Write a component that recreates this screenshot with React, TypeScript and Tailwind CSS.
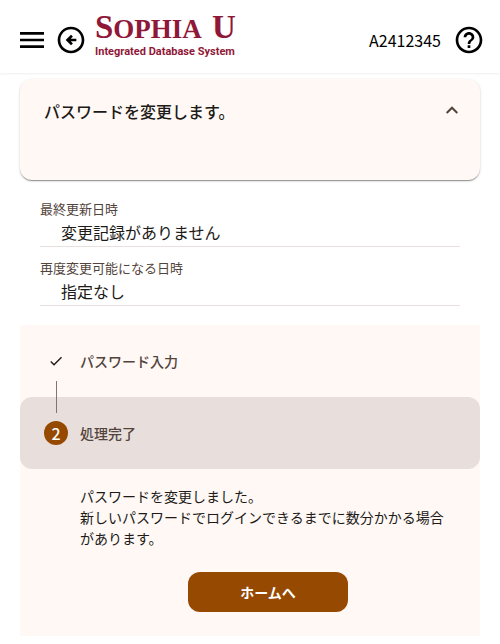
import {
  MdCheck,
  MdHelpOutline,
  MdMenu,
  MdOutlineArrowCircleLeft,
} from "react-icons/md"

const records = [
  { label: "最終更新日時", value: "変更記録がありません" },
  { label: "再度変更可能になる日時", value: "指定なし" },
]

function Logo() {
  return (
    <svg
      className="h-12 w-40 overflow-visible fill-[#8f1838]"
      viewBox="0 0 160 48"
      role="img"
      aria-label="Sophia U Integrated Database System"
    >
      <g className="font-['Liberation_Serif',serif] font-bold">
        <text x="0" y="22">
          <tspan fontSize="33">S</tspan>
          <tspan fontSize="27">OPHIA</tspan>
        </text>
        <text x="117" y="22" fontSize="33">
          U
        </text>
      </g>
      <text
        x="0"
        y="39"
        fontSize="11"
        className="font-[Roboto,sans-serif] font-bold"
      >
        Integrated Database System
      </text>
    </svg>
  )
}

function ChevronUp() {
  return (
    <svg
      className="size-6 fill-none stroke-[#52443c] stroke-2"
      viewBox="0 0 24 24"
      aria-hidden="true"
    >
      <path d="M6.7 14 12 8.7l5.3 5.3" />
    </svg>
  )
}

function Header() {
  return (
    <header className="flex h-[73px] items-center bg-white pt-[7px] pr-[15px] pl-4 text-black shadow-[0_0_3px_rgba(0,0,0,0.12)]">
      <button className="cursor-pointer" aria-label="メニュー">
        <MdMenu size={32} />
      </button>
      <button className="ml-[7px] cursor-pointer" aria-label="戻る">
        <MdOutlineArrowCircleLeft size={32} />
      </button>
      <a href="#" className="ml-2">
        <Logo />
      </a>
      <span className="ml-auto text-base">A2412345</span>
      <button className="ml-3 cursor-pointer" aria-label="ヘルプ">
        <MdHelpOutline size={32} />
      </button>
    </header>
  )
}

export default function App() {
  return (
    <div className="min-h-screen bg-white font-['Noto_Sans_CJK_JP',sans-serif] text-[#201a17]">
      <Header />

      <main className="px-5 pt-1.5 pb-2">
        {/* description panel */}
        <section className="rounded-xl bg-[#fff8f5] pt-5 pr-4 pb-[57px] pl-6 shadow-[0_2px_1px_-1px_rgba(0,0,0,0.2),0_1px_1px_rgba(0,0,0,0.2),0_1px_3px_rgba(0,0,0,0.14)]">
          <button
            className="flex w-full cursor-pointer items-center justify-between text-left"
            aria-expanded="true"
          >
            <span className="text-base/6 font-medium">
              パスワードを変更します。
            </span>
            <ChevronUp />
          </button>
        </section>

        {/* change records */}
        <dl className="flex flex-col gap-[11px] px-5 pt-[19px]">
          {records.map((record) => (
            <div key={record.label} className="border-b border-[#e8dfdf]">
              <dt className="text-[13px]/5 text-[#52443c]">{record.label}</dt>
              <dd className="pt-px pb-0.5 pl-[21px] text-base/6">
                {record.value}
              </dd>
            </div>
          ))}
        </dl>

        {/* stepper */}
        <section className="mt-[19px] bg-[#fff8f5] pb-6">
          <div className="relative flex h-18 items-center gap-3 px-6 text-sm font-medium text-[#52443c]">
            <span className="flex size-6 items-center justify-center text-[#201a17]">
              <MdCheck size={16} />
            </span>
            パスワード入力
            {/* connector */}
            <span className="absolute top-14 left-9 z-10 h-8 border-l border-[#85746b]" />
          </div>
          <div className="flex h-18 items-center gap-3 rounded-xl bg-[#e8dfdc] px-6 text-sm font-medium text-[#52443c]">
            <span className="flex size-6 items-center justify-center rounded-full bg-[#964900] text-base text-white">
              2
            </span>
            処理完了
          </div>

          <div className="pt-[17px] pr-6 pl-15 text-sm/[21px]">
            <p>パスワードを変更しました。</p>
            <p>
              新しいパスワードでログインできるまでに数分かかる場合があります。
            </p>
            <button className="mx-auto mt-[23px] block h-10 w-40 cursor-pointer rounded-xl bg-[#964900] font-bold text-white">
              ホームへ
            </button>
          </div>
        </section>
      </main>
    </div>
  )
}
